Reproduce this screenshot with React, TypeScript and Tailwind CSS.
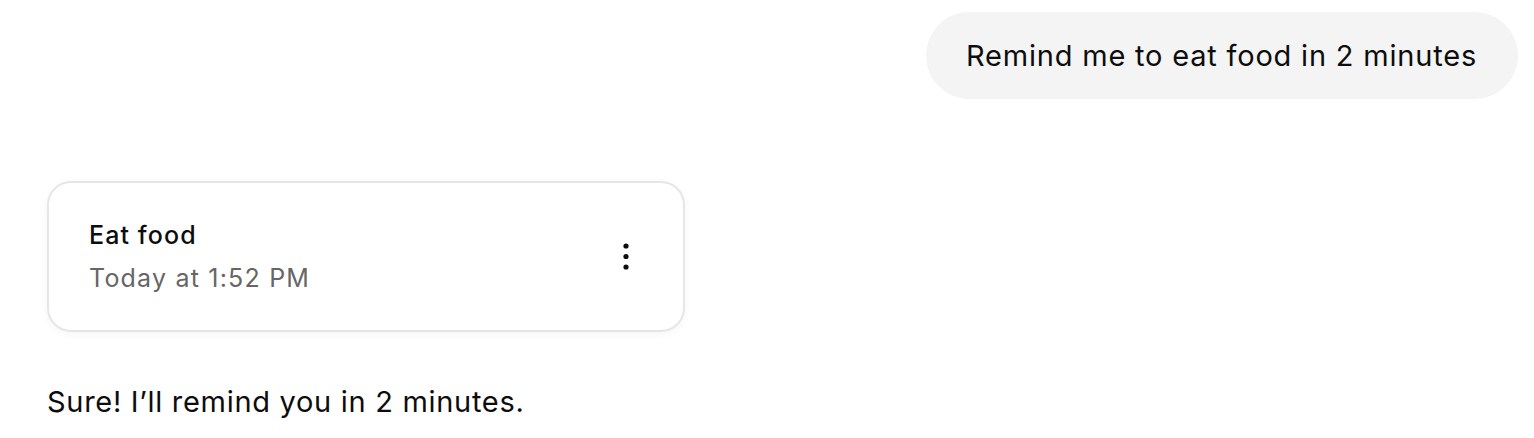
import React from "react";

export default function App() {
  return (
    <div
      className="w-[1534px] h-[438px] bg-white text-[#0d0d0d] overflow-hidden"
      style={{ fontFamily: "Inter, 'Noto Sans', sans-serif" }}
    >
      <div className="flex flex-col pl-[47px] pr-[16px] pt-[12px]">
        <div className="flex justify-end">
          <div className="h-[87px] rounded-full bg-[#f4f4f4] pl-[40px] pr-[41px] flex items-center text-[29px] leading-[36px] tracking-[0.8px] whitespace-nowrap">
            Remind me to eat food in 2 minutes
          </div>
        </div>
        <div className="mt-[82px] w-[638px] h-[151px] rounded-[24px] border-2 border-[#e6e6e6] bg-white shadow-[0_2px_10px_rgba(0,0,0,0.04)] flex items-center justify-between pl-[40px] pr-[53px]">
          <div className="flex flex-col mt-[-1px]">
            <div className="text-[25px] leading-[30px] font-medium tracking-[1.1px]">Eat food</div>
            <div className="text-[25px] leading-[30px] mt-[13px] tracking-[1.2px] text-[#666666]">Today at 1:52 PM</div>
          </div>
          <svg width="8" height="28" viewBox="0 0 8 28" className="mt-[-2px]">
            <circle cx="4" cy="4" r="2.6" fill="#0d0d0d" />
            <circle cx="4" cy="14.5" r="2.6" fill="#0d0d0d" />
            <circle cx="4" cy="25" r="2.6" fill="#0d0d0d" />
          </svg>
        </div>
        <div className="mt-[52px] text-[29px] leading-[36px] tracking-[0.7px] whitespace-nowrap">Sure! I’ll remind you in 2 minutes.</div>
      </div>
    </div>
  );
}
